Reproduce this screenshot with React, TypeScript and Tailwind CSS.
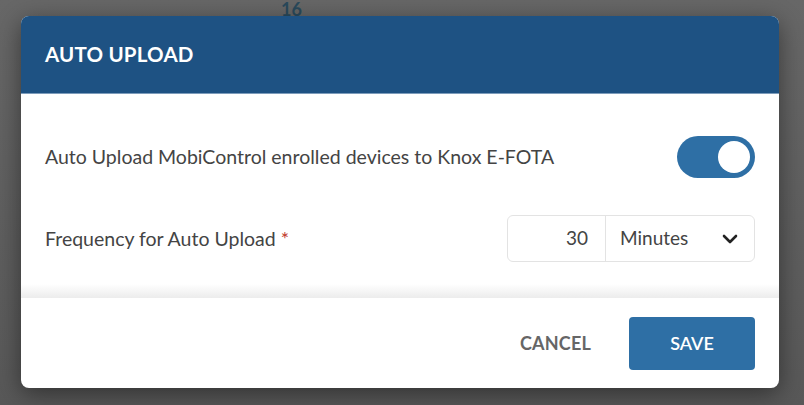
import { useState } from "react";

const font = { fontFamily: "'Source Sans Pro', Lato, 'Noto Sans', sans-serif" };

function Toggle({ on, onChange }: { on: boolean; onChange: () => void }) {
  return (
    <button
      onClick={onChange}
      className={`flex h-[42px] w-[78px] items-center rounded-full px-[5px] ${
        on ? "justify-end bg-[#2e6fa5]" : "justify-start bg-[#c4c4c4]"
      }`}
    >
      <span className="block h-[32px] w-[32px] rounded-full bg-white" />
    </button>
  );
}

export default function App() {
  const [on, setOn] = useState(true);

  return (
    <div
      className="relative h-[405px] w-[804px] overflow-hidden bg-gradient-to-b from-[#676767] to-[#585858]"
      style={font}
    >
      <span className="absolute left-[281px] top-[-4px] text-[18px] font-bold text-[#2a4a5c]">
        16
      </span>

      <div className="absolute left-[21px] top-[16px] flex w-[758px] flex-col overflow-hidden rounded-[8px] bg-white shadow-[0_6px_24px_rgba(0,0,0,0.45)]">
        <div className="flex h-[78px] items-center border-b border-[#7d9cbb] bg-[#1e5283] px-[24px]">
          <h1 className="text-[20.5px] font-bold tracking-[0.2px] text-white">AUTO UPLOAD</h1>
        </div>

        <div className="flex flex-col px-[24px] pb-[22px] pt-[42px]">
          <div className="flex items-center justify-between">
            <span className="text-[19.5px] text-[#444]">
              Auto Upload MobiControl enrolled devices to Knox E-FOTA
            </span>
            <Toggle on={on} onChange={() => setOn(!on)} />
          </div>

          <div className="mt-[37px] flex items-center justify-between">
            <span className="text-[19.5px] text-[#444]">
              Frequency for Auto Upload <span className="text-[#c0392b]">*</span>
            </span>
            <div className="flex h-[47px] w-[248px] rounded-[6px] border border-[#e3e3e3] text-[19px] text-[#444]">
              <div className="flex w-[98px] items-center justify-end border-r border-[#e3e3e3] pr-[17px]">
                30
              </div>
              <div className="flex flex-1 items-center justify-between pl-[14px] pr-[16px]">
                <span>Minutes</span>
                <svg width="16" height="12" viewBox="0 0 16 12" fill="none">
                  <path d="M2 3l6 6 6-6" stroke="#222" strokeWidth="2.6" strokeLinecap="round" strokeLinejoin="round" />
                </svg>
              </div>
            </div>
          </div>
        </div>

        <div className="h-[14px] bg-gradient-to-b from-white to-[#ececec]" />

        <div className="flex h-[90px] items-center justify-end gap-[38px] px-[24px]">
          <button className="text-[18px] font-bold tracking-[0.2px] text-[#666]">CANCEL</button>
          <button className="h-[53px] w-[126px] rounded-[4px] bg-[#2e6fa5] text-[18px] font-semibold text-white">
            SAVE
          </button>
        </div>
      </div>
    </div>
  );
}
